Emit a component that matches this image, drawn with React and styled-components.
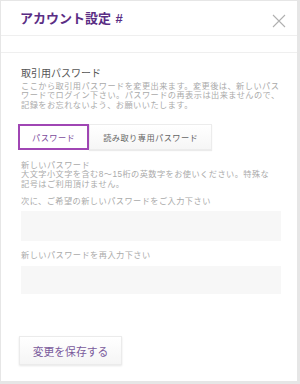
import React from "react";
import styled, { createGlobalStyle } from "styled-components";

const Global = createGlobalStyle`
  html, body { margin: 0; padding: 0; }
  body {
    background: #e6e6e6;
    font-family: "Liberation Sans", "Noto Sans CJK JP", sans-serif;
  }
`;

const Page = styled.div`
  width: 300px;
  height: 384px;
  box-sizing: border-box;
  padding: 1px 3px 3px 1px;
`;

const Card = styled.div`
  background: #fff;
  height: 380px;
  display: flex;
  flex-direction: column;
`;

const Header = styled.div`
  height: 34px;
  border-bottom: 1px solid #efefef;
  display: flex;
  align-items: center;
  justify-content: space-between;
  padding: 0 11px 0 19px;
`;

const Title = styled.h1`
  margin: 0;
  font-size: 13px;
  line-height: 15px;
  font-weight: 700;
  color: #5a2d84;
  padding-top: 1px;
  word-spacing: 1px;
`;

const Close = styled.button`
  border: 0;
  background: none;
  padding: 0;
  width: 14px;
  height: 14px;
  margin-top: 7px;
  display: flex;
`;

const Strip = styled.div`
  height: 16px;
  border-bottom: 1px solid #efefef;
`;

const Body = styled.div`
  padding: 0 19px 16px 20px;
  display: flex;
  flex-direction: column;
  flex: 1;
`;

const SectionTitle = styled.h2`
  margin: 15px 0 0;
  font-size: 10px;
  line-height: 12px;
  font-weight: 400;
  color: #555;
`;

const Text = styled.p`
  margin: ${(p) => p.$mt || 0}px 0 0;
  font-size: 8.2px;
  letter-spacing: 0.45px;
  line-height: ${(p) => p.$lh || 9.5}px;
  color: #aaa;
  white-space: nowrap;
`;

const Tabs = styled.div`
  display: flex;
  margin: 13.5px 0 0 -3px;
`;

const Tab = styled.button`
  height: 26px;
  box-sizing: border-box;
  font-family: inherit;
  font-size: 8.2px;
  letter-spacing: 0.45px;
  padding: 0 ${(p) => (p.$active ? 12 : 13)}px;
  background: ${(p) =>
    p.$active ? "#fff" : "linear-gradient(#fff, #f6f6f6)"};
  border: ${(p) => (p.$active ? "2px solid #a046b4" : "1px solid #ececec")};
  box-shadow: ${(p) => (p.$active ? "none" : "0 1px 1px rgba(0,0,0,0.08)")};
  color: ${(p) => (p.$active ? "#7c4c9c" : "#666")};
  cursor: pointer;
`;

const Input = styled.input`
  margin-top: ${(p) => p.$mt}px;
  height: ${(p) => p.$h}px;
  width: 260px;
  box-sizing: border-box;
  border: 0;
  background: #f7f7f7;
  outline: none;
`;

const SaveButton = styled.button`
  margin: 42px 0 0 -2px;
  align-self: flex-start;
  width: 103px;
  height: 29px;
  box-sizing: border-box;
  font-family: inherit;
  font-size: 10.8px;
  color: #7a5a9c;
  background: linear-gradient(#fff, #f5f5f5);
  border: 1px solid #ebebeb;
  box-shadow: 0 1px 2px rgba(0, 0, 0, 0.1);
  cursor: pointer;
`;

export default function App() {
  return (
    <>
      <Global />
      <Page>
        <Card>
          <Header>
            <Title>アカウント設定 #</Title>
            <Close aria-label="close">
              <svg width="14" height="14" viewBox="0 0 14 14">
                <path d="M1 1 L13 13 M13 1 L1 13" stroke="#b0b0b0" strokeWidth="1.1" fill="none" />
              </svg>
            </Close>
          </Header>
          <Strip />
          <Body>
            <SectionTitle>取引用パスワード</SectionTitle>
            <Text $mt={2}>
              ここから取引用パスワードを変更出来ます。変更後は、新しいパス
              <br />
              ワードでログイン下さい。パスワードの再表示は出来ませんので、
              <br />
              記録をお忘れないよう、お願いいたします。
            </Text>
            <Tabs>
              <Tab $active>パスワード</Tab>
              <Tab>読み取り専用パスワード</Tab>
            </Tabs>
            <Text $mt={11.5} $lh={9.2}>
              新しいパスワード
              <br />
              大文字小文字を含む8～15桁の英数字をお使いください。特殊な
              <br />
              記号はご利用頂けません。
            </Text>
            <Text $mt={8.3} $lh={10}>次に、ご希望の新しいパスワードをご入力下さい</Text>
            <Input type="password" $mt={4} $h={30} />
            <Text $mt={10} $lh={10}>新しいパスワードを再入力下さい</Text>
            <Input type="password" $mt={5} $h={28} />
            <SaveButton>変更を保存する</SaveButton>
          </Body>
        </Card>
      </Page>
    </>
  );
}
